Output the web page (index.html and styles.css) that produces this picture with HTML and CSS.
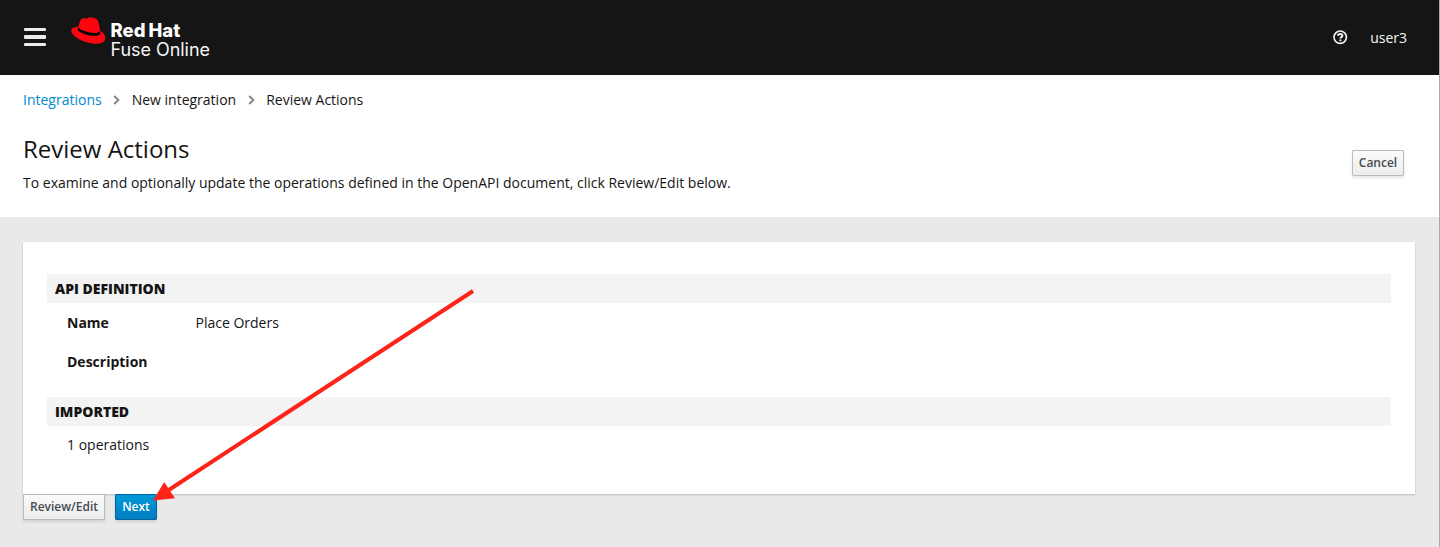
FILE: index.html
```html
<!DOCTYPE html>
<html lang="en">
<head>
<meta charset="utf-8">
<title>Review Actions</title>
<link rel="stylesheet" href="styles.css">
</head>
<body>
<div class="page">
  <header class="masthead">
    <div class="menu"><i></i><i></i><i></i></div>
    <div class="brand">
      <svg class="hat" viewBox="0 0 105 81" width="35" height="27">
        <path fill="#fa0510" d="M22 31C25 15 29 5 36 4C44 3 47 6 53 2C58 -1 63 2 69 3C77 4 80 9 83 17L88 42C97 47 104 56 103 65C100 77 86 81 70 80C41 78 4 61 1 43C0 33 9 29 22 30Z"/>
        <path fill="#050505" d="M22 31C26 39 52 48 69 48C79 48 86 46 87 41L88 49C86 55 79 57 69 57C48 56 23 46 20 39Z"/>
      </svg>
      <div class="brand-name"><div class="company">Red Hat</div><div class="product">Fuse Online</div></div>
    </div>
    <div class="tools">
      <svg class="help" viewBox="0 0 15 15" width="15" height="15" fill="none" stroke="#f3f3f3">
        <circle cx="7.2" cy="7.2" r="6.2" stroke-width="1.6"/>
        <path d="M5 5.8C5.1 3.4 9.4 3.3 9.4 5.7C9.4 7.2 7.4 7 7.4 8.5M7.4 9.4V11.2" stroke-width="1.9"/>
      </svg>
      <span>user3</span>
    </div>
  </header>
  <section class="heading">
    <nav class="crumbs">
      <a>Integrations</a>
      <svg class="chevron" viewBox="0 0 7 10" width="7" height="10"><path d="M1.2 1L5.3 5L1.2 9"/></svg>
      <span>New integration</span>
      <svg class="chevron" viewBox="0 0 7 10" width="7" height="10"><path d="M1.2 1L5.3 5L1.2 9"/></svg>
      <span>Review Actions</span>
    </nav>
    <div class="heading-row">
      <div>
        <h1>Review Actions</h1>
        <p>To examine and optionally update the operations defined in the OpenAPI document, click Review/Edit below.</p>
      </div>
      <button class="btn cancel">Cancel</button>
    </div>
  </section>
  <main class="content">
    <section class="card">
      <h2>API DEFINITION</h2>
      <dl>
        <dt>Name</dt><dd>Place Orders</dd>
        <dt>Description</dt><dd></dd>
      </dl>
      <h2>IMPORTED</h2>
      <p class="operations">1 operations</p>
    </section>
    <div class="actions">
      <button class="btn edit">Review/Edit</button>
      <button class="btn primary">Next</button>
    </div>
  </main>
  <svg class="arrow" viewBox="0 0 1440 547" width="1440" height="547">
    <path d="M473 291L168 490.5" stroke="#ff2419" stroke-width="4"/>
    <path d="M153 500.5L164.2 482L175 498.3Z" fill="#ff2419"/>
  </svg>
</div>
</body>
</html>
```
FILE: styles.css
```css
* { box-sizing: border-box; }
body { margin: 0; font: 14px/20px "Open Sans", sans-serif; color: #151515; }
h1, h2, p, dl, dd { margin: 0; }
.page { position: relative; width: 1440px; height: 547px; overflow: hidden; background: #e9e9e9; border-right: 1px solid #aaa; }
.masthead { display: flex; height: 75px; background: #151515; color: #f5f5f5; padding-left: 24px; }
.menu { width: 22px; padding-top: 27.5px; display: flex; flex-direction: column; gap: 4px; }
.menu i { height: 3.5px; border-radius: 1px; background: #ececec; }
.brand { display: flex; margin-left: 25px; padding-top: 17px; }
.brand-name { margin-left: 4.5px; padding-top: 4px; font-family: "Inter", sans-serif; line-height: 19px; white-space: nowrap; }
.company { font-size: 18.5px; font-weight: 800; letter-spacing: 0; word-spacing: -1px; color: #fff; }
.product { font-size: 18px; letter-spacing: -0.05px; }
.tools { display: flex; align-items: center; gap: 22.5px; margin-left: auto; padding-right: 32px; }
.heading { height: 142px; padding: 15px 35px 0 23px; background: #fff; }
.crumbs { display: flex; align-items: center; height: 20px; }
.crumbs a { color: #0088ce; }
.chevron { margin: 0 11.5px; fill: none; stroke: #888; stroke-width: 2; }
.heading-row { display: flex; justify-content: space-between; padding-top: 21px; }
h1 { font-size: 24px; line-height: 36px; font-weight: 400; }
.heading-row p { margin-top: 6px; }
.btn { display: block; height: 26px; padding: 0; border: 1px solid #bbb; border-radius: 1px; background: linear-gradient(#fafafa, #ededed); color: #464b52; font: 600 12px/22px "Open Sans", sans-serif; box-shadow: 0 2px 3px rgba(3, 3, 3, .1); }
.cancel { width: 52px; margin-top: 19px; }
.edit { width: 82px; }
.primary { width: 42px; border-color: #00659c; background: linear-gradient(#0099d8, #007dc0); color: #fff; }
.content { padding: 25px 24px 0 23px; }
.card { height: 252px; padding: 32px 24px 0; background: #fff; box-shadow: 0 1px 2px rgba(3, 3, 3, .2); }
h2 { height: 29px; padding-left: 8px; background: #f3f3f3; font-size: 14px; line-height: 29px; font-weight: 800; }
dl { display: grid; grid-template-columns: 128.5px 1fr; grid-auto-rows: 20px; row-gap: 19px; padding: 10px 20px 25px; }
dt { font-weight: 700; }
.operations { padding: 9px 20px; }
.actions { display: flex; gap: 10px; }
.arrow { position: absolute; left: 0; top: 0; pointer-events: none; }
```
